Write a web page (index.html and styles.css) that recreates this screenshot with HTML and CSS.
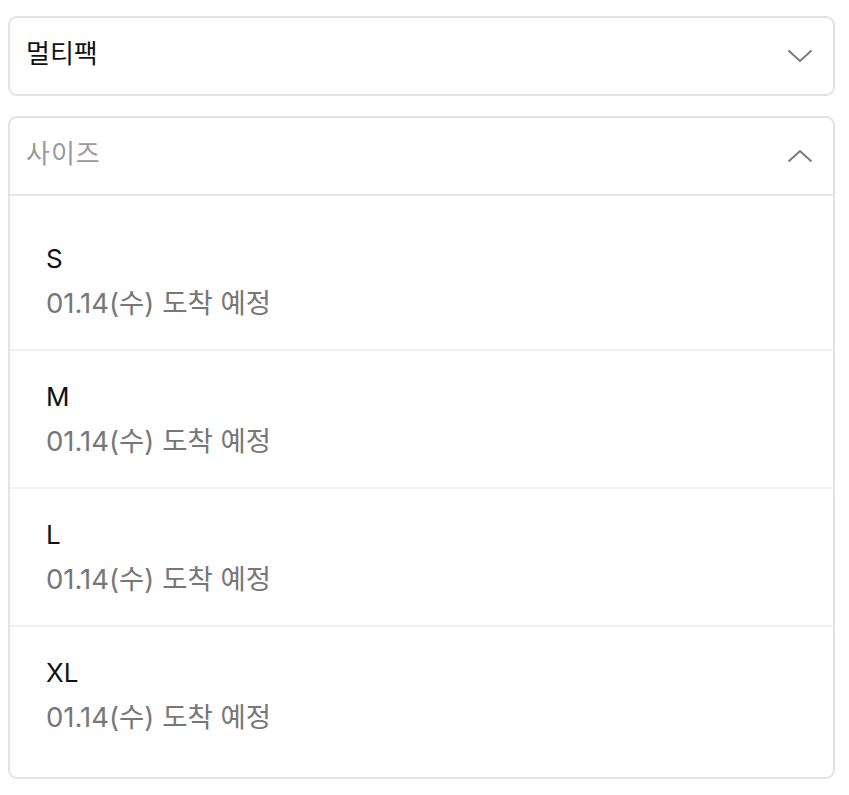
FILE: index.html
```html
<!DOCTYPE html>
<html lang="ko">
<head>
<meta charset="utf-8">
<link rel="stylesheet" href="styles.css">
</head>
<body>
<div class="page">
  <div class="select">
    <div class="select-head">
      <span class="value">멀티팩</span>
      <svg class="chev" width="26" height="14" viewBox="0 0 26 14"><path d="M1.5 1.5 L13 12 L24.5 1.5" fill="none" stroke="#7a7a7a" stroke-width="2"/></svg>
    </div>
  </div>
  <div class="select open">
    <div class="select-head">
      <span class="placeholder">사이즈</span>
      <svg class="chev" width="26" height="14" viewBox="0 0 26 14"><path d="M1.5 12.5 L13 2 L24.5 12.5" fill="none" stroke="#7a7a7a" stroke-width="2"/></svg>
    </div>
    <ul class="options">
      <li class="option"><div class="name">S</div><div class="eta">01.14(수) 도착 예정</div></li>
      <li class="option"><div class="name">M</div><div class="eta">01.14(수) 도착 예정</div></li>
      <li class="option"><div class="name">L</div><div class="eta">01.14(수) 도착 예정</div></li>
      <li class="option"><div class="name">XL</div><div class="eta">01.14(수) 도착 예정</div></li>
    </ul>
  </div>
</div>
</body>
</html>
```
FILE: styles.css
```css
* { box-sizing: border-box; }
html, body { margin: 0; padding: 0; background: #fff; }
body {
  font-family: "Inter", "Noto Sans CJK KR", sans-serif;
  color: #111;
}
.page {
  padding: 16px 14px 0 8px;
  display: flex;
  flex-direction: column;
  gap: 20px;
}
.select {
  border: 2px solid #e3e3e3;
  border-radius: 9px;
  background: #fff;
}
.select-head {
  height: 76px;
  display: flex;
  align-items: center;
  justify-content: space-between;
  padding: 0 20px 0 16px;
}
.value, .placeholder {
  font-size: 26px;
  line-height: 1;
  position: relative;
  top: -2px;
}
.placeholder { color: #9a9a9a; letter-spacing: 1px; }
.chev { display: block; }
.options {
  list-style: none;
  margin: 0;
  padding: 17px 0 14px;
  border-top: 2px solid #e6e6e6;
}
.option {
  padding: 26px 0 26px 36px;
  border-top: 2px solid #f1f1f1;
}
.option:first-child { border-top: none; }
.name {
  font-size: 26px;
  line-height: 40px;
  color: #111;
}
.eta {
  font-size: 27.5px;
  line-height: 40px;
  margin-top: 4px;
  color: #777;
}
```
